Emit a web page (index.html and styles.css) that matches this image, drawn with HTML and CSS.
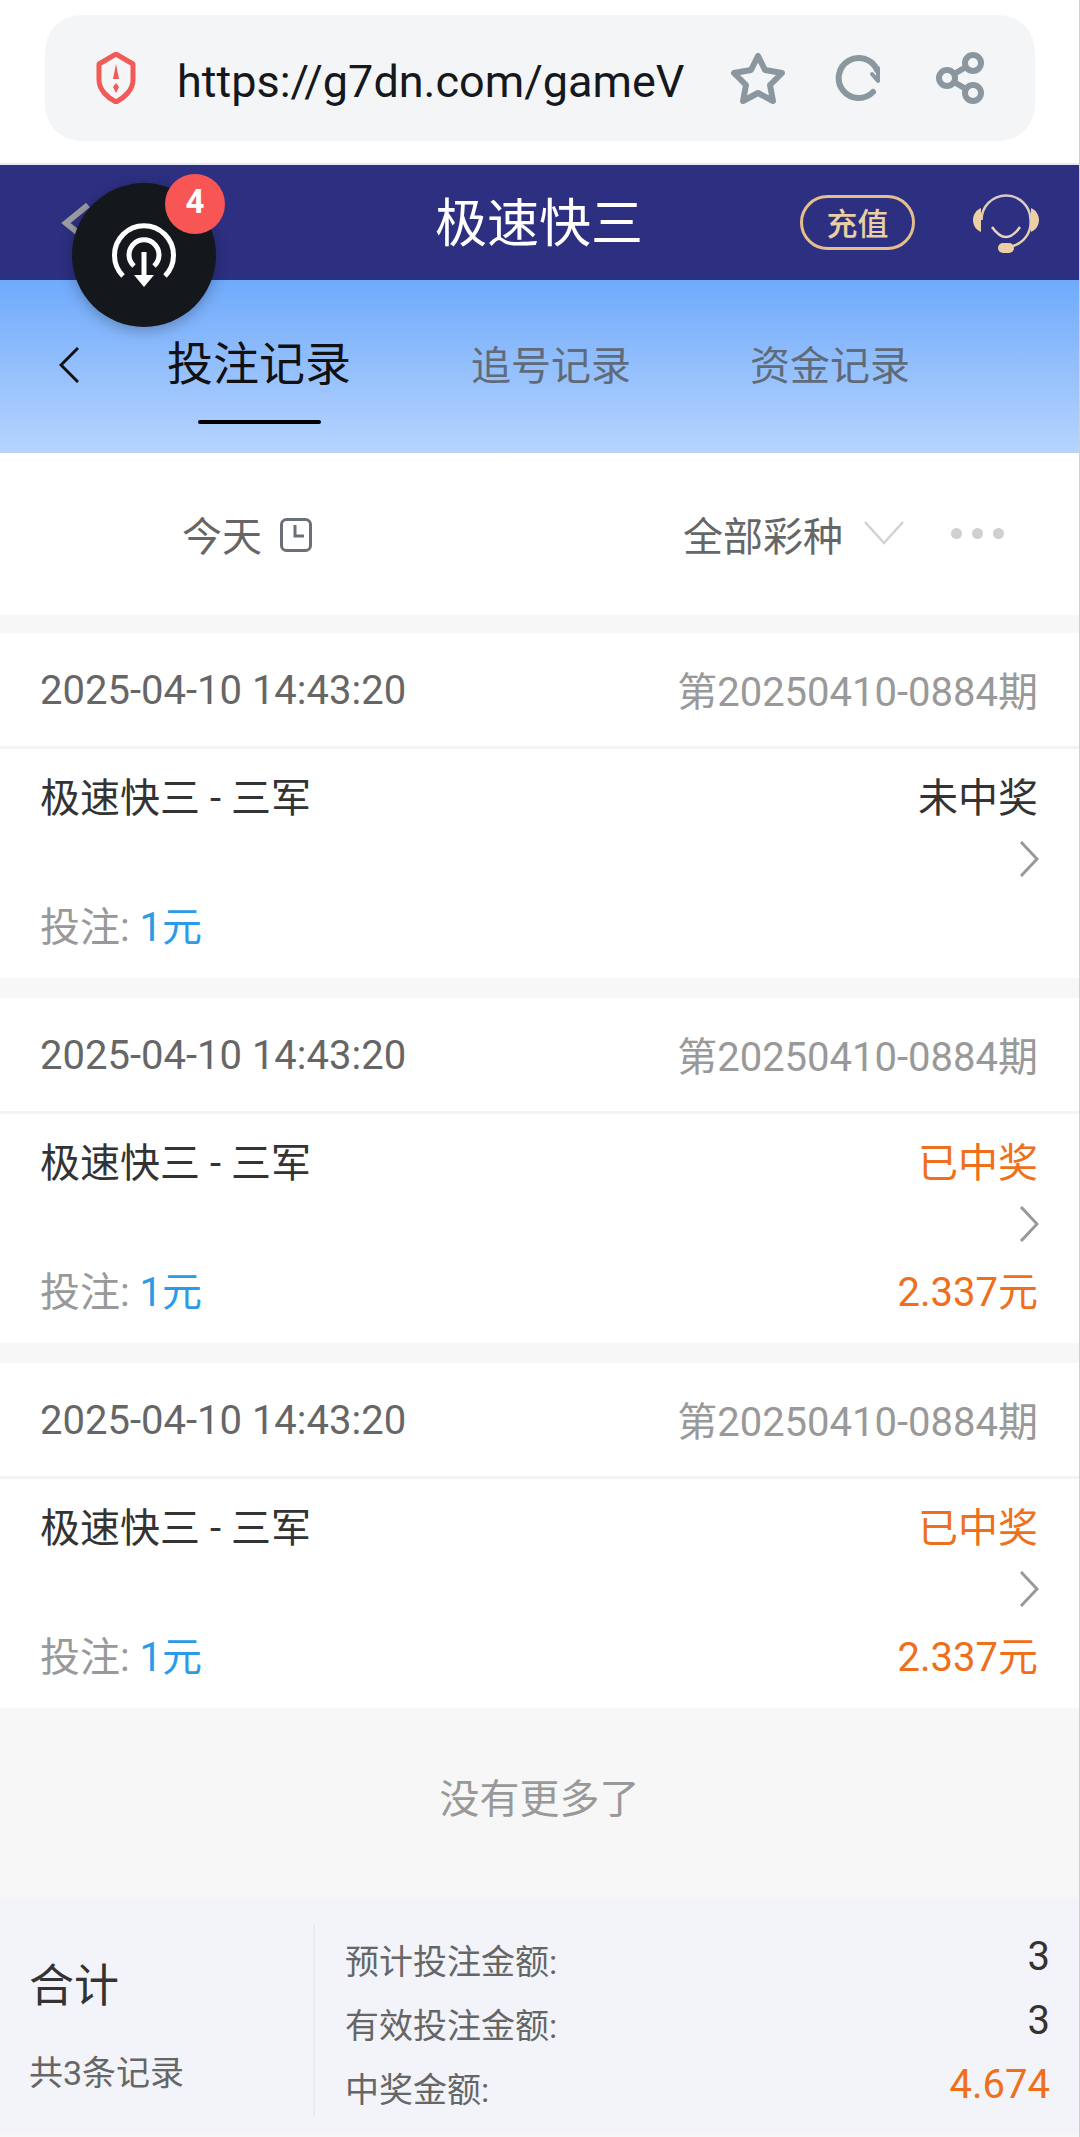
FILE: index.html
```html
<!DOCTYPE html>
<html lang="zh-CN">
<head>
    <meta charset="UTF-8">
    <meta name="viewport" content="width=device-width, initial-scale=1.0">
    <title>投注记录</title>
    <link rel="stylesheet" href="styles.css">
</head>
<body>

<div class="browser">
    <div class="browser__bar">
        <svg class="browser__shield" viewBox="0 0 40 52"><path d="M20 2 L37 12 V28 C37 38 28 46 20 50 C12 46 3 38 3 28 V12 Z" fill="none" stroke="#f05b58" stroke-width="5" stroke-linejoin="round"/><path d="M20 12 L23 27 H17 Z M20 31 L23 35 L20 41 L17 35 Z" fill="#f05b58"/></svg>
        <div class="browser__url">https://g7dn.com/gameV</div>
        <svg class="browser__icon browser__icon--star" viewBox="0 0 56 52"><path d="M28 4 L35 18 L52 21 L40 33 L43 49 L28 41 L13 49 L16 33 L4 21 L21 18 Z" fill="none" stroke="#8a979f" stroke-width="6" stroke-linejoin="round"/></svg>
        <svg class="browser__icon browser__icon--reload" viewBox="0 0 48 48"><path d="M38 38 A20 20 0 1 1 42 16" fill="none" stroke="#8a979f" stroke-width="6" stroke-linecap="round"/><path d="M43 14 V27 L37 20" fill="none" stroke="#8a979f" stroke-width="4" stroke-linecap="round" stroke-linejoin="round"/></svg>
        <svg class="browser__icon browser__icon--share" viewBox="0 0 50 52"><g fill="none" stroke="#8a979f" stroke-width="6"><circle cx="11" cy="26" r="8"/><circle cx="37" cy="11" r="8"/><circle cx="37" cy="41" r="8"/><path d="M18 22 L30 15 M18 30 L30 37"/></g></svg>
    </div>
</div>

<header class="topbar">
    <svg class="topbar__back" viewBox="0 0 30 42"><path d="M27 3 L5 21 L27 39" fill="none" stroke="#9b9ca3" stroke-width="6"/></svg>
    <div class="topbar__title">极速快三</div>
    <div class="topbar__charge">充值</div>
    <svg class="topbar__service" viewBox="0 0 66 60">
        <defs><linearGradient id="gold" x1="0" y1="0" x2="0" y2="1"><stop offset="0" stop-color="#d9c9c8"/><stop offset="1" stop-color="#edcfa5"/></linearGradient></defs>
        <path d="M8.500 27 A24.500 24.500 0 0 1 57.500 27 A24.500 24.500 0 0 1 40 53" fill="none" stroke="url(#gold)" stroke-width="2.500"/>
        <path d="M8 15 C3 17 0 22 0 27 C0 32 3 37 8 39 Z M58 15 C63 17 66 22 66 27 C66 32 63 37 58 39 Z" fill="#edcfa5"/>
        <path d="M19 34 Q33 54 47 34" fill="none" stroke="#e8d3c0" stroke-width="2.500"/>
        <rect x="25" y="50" width="16" height="10" rx="5" fill="#edcfa5"/>
    </svg>
</header>

<nav class="tabs">
    <svg class="tabs__back" viewBox="0 0 20 36"><path d="M19 1 L2 18 L19 35" fill="none" stroke="#111" stroke-width="3"/></svg>
    <div class="tabs__item tabs__item--active">投注记录</div>
    <div class="tabs__item">追号记录</div>
    <div class="tabs__item">资金记录</div>
</nav>

<div class="filter">
    <span class="filter__date">今天</span>
    <svg class="filter__clock" viewBox="0 0 32 34"><rect x="1.500" y="1.500" width="29" height="31" rx="5" fill="none" stroke="#6b7078" stroke-width="3"/><path d="M15 7 V18 H24" fill="none" stroke="#6b7078" stroke-width="3"/></svg>
    <span class="filter__type">全部彩种</span>
    <svg class="filter__arrow" viewBox="0 0 40 24"><path d="M1 1 L20 22 L39 1" fill="none" stroke="#d2d2d2" stroke-width="2.500"/></svg>
    <div class="filter__more"><i></i><i></i><i></i></div>
</div>

<main class="list">
    <section class="record">
        <div class="record__head">
            <span class="record__time">2025-04-10 14:43:20</span>
            <span class="record__issue">第20250410-0884期</span>
        </div>
        <div class="record__body">
            <span class="record__name">极速快三 - 三军</span>
            <span class="record__status">未中奖</span>
            <svg class="record__arrow" viewBox="0 0 20 36"><path d="M2 1 L18 18 L2 35" fill="none" stroke="#999" stroke-width="3"/></svg>
            <span class="record__bet">投注: <b>1元</b></span>
            <span class="record__prize"></span>
        </div>
    </section>
    <section class="record">
        <div class="record__head">
            <span class="record__time">2025-04-10 14:43:20</span>
            <span class="record__issue">第20250410-0884期</span>
        </div>
        <div class="record__body">
            <span class="record__name">极速快三 - 三军</span>
            <span class="record__status record__status--win">已中奖</span>
            <svg class="record__arrow" viewBox="0 0 20 36"><path d="M2 1 L18 18 L2 35" fill="none" stroke="#999" stroke-width="3"/></svg>
            <span class="record__bet">投注: <b>1元</b></span>
            <span class="record__prize">2.337元</span>
        </div>
    </section>
    <section class="record">
        <div class="record__head">
            <span class="record__time">2025-04-10 14:43:20</span>
            <span class="record__issue">第20250410-0884期</span>
        </div>
        <div class="record__body">
            <span class="record__name">极速快三 - 三军</span>
            <span class="record__status record__status--win">已中奖</span>
            <svg class="record__arrow" viewBox="0 0 20 36"><path d="M2 1 L18 18 L2 35" fill="none" stroke="#999" stroke-width="3"/></svg>
            <span class="record__bet">投注: <b>1元</b></span>
            <span class="record__prize">2.337元</span>
        </div>
    </section>
</main>

<div class="nomore">没有更多了</div>

<footer class="total">
    <div class="total__left">
        <div class="total__title">合计</div>
        <div class="total__count">共3条记录</div>
    </div>
    <div class="total__rows">
        <div class="total__row"><span>预计投注金额:</span><b>3</b></div>
        <div class="total__row"><span>有效投注金额:</span><b>3</b></div>
        <div class="total__row"><span>中奖金额:</span><b class="total__win">4.674</b></div>
    </div>
</footer>

<div class="floatball">
    <svg class="floatball__icon" viewBox="0 0 66 66"><g fill="none" stroke="#fff" stroke-width="5"><path d="M12 54 A29.500 29.500 0 1 1 54 54"/><path d="M23 44 A15 15 0 1 1 43 44"/><path d="M33 30 V55"/></g><path d="M23 53 H43 L33 65 Z" fill="#fff"/></svg>
    <span class="floatball__badge">4</span>
</div>

</body>
</html>
```

FILE: styles.css
```css
* {
    box-sizing: border-box;
}
body {
    margin: 0;
    height: 2137px;
    overflow: hidden;
    position: relative;
    background: #f7f7f7;
    border-right: 1px solid #d0d0d3;
    font-family: Roboto, "Noto Sans CJK SC", sans-serif;
    font-size: 40px;
    color: #333;
}

.browser {
    height: 165px;
    background: #fff;
    padding: 15px 44px 0 45px;
    border-bottom: 2px solid #e6e8f4;
}
.browser__bar {
    display: flex;
    align-items: center;
    height: 126px;
    padding-left: 51px;
    background: #f4f5f7;
    border-radius: 36px;
}
.browser__shield {
    width: 40px;
    height: 52px;
}
.browser__url {
    margin: 6px 0 0 41px;
    width: 505px;
    font-size: 45px;
    color: #15181c;
    white-space: nowrap;
}
.browser__icon--star {
    width: 56px;
    height: 52px;
    margin-left: 48px;
}
.browser__icon--reload {
    width: 48px;
    height: 48px;
    margin-left: 49px;
}
.browser__icon--share {
    width: 50px;
    height: 52px;
    margin-left: 53px;
}

.topbar {
    display: flex;
    align-items: center;
    height: 115px;
    padding-left: 61px;
    background: #2d2f80;
}
.topbar__back {
    width: 30px;
    height: 42px;
}
.topbar__title {
    margin: -6px 0 0 344px;
    width: 208px;
    font-size: 52px;
    color: #fff;
    white-space: nowrap;
}
.topbar__charge {
    margin-left: 157px;
    width: 115px;
    height: 55px;
    line-height: 54px;
    text-align: center;
    font-size: 31px;
    font-weight: 500;
    color: #e9cfa3;
    border: 3px solid #e5bf8a;
    border-radius: 28px;
}
.topbar__service {
    margin-left: 58px;
    width: 66px;
    height: 60px;
}

.tabs {
    display: flex;
    align-items: center;
    height: 173px;
    padding: 0 0 8px 59px;
    background: linear-gradient(#6faafb, #b7d4fe);
}
.tabs__back {
    width: 20px;
    height: 36px;
    margin: 4px 88px 0 0;
}
.tabs__item {
    margin-right: 119px;
    color: #5f6b78;
    white-space: nowrap;
    position: relative;
}
.tabs__item--active {
    margin-top: -6px;
    margin-right: 120px;
    font-size: 46px;
    color: #111;
}
.tabs__item--active::after {
    content: "";
    position: absolute;
    left: 31px;
    top: 93px;
    width: 123px;
    height: 4px;
    border-radius: 2px;
    background: #000;
}

.filter {
    display: flex;
    align-items: center;
    height: 162px;
    padding: 0 75px 0 182px;
    background: #fff;
    color: #666;
}
.filter__clock {
    width: 32px;
    height: 34px;
    margin-left: 18px;
    margin-top: 2px;
}
.filter__type {
    margin-left: auto;
}
.filter__arrow {
    width: 40px;
    height: 24px;
    margin-left: 21px;
    margin-top: -2px;
}
.filter__more {
    display: flex;
    gap: 10px;
    margin-left: 47px;
    margin-top: -2px;
}
.filter__more i {
    width: 11px;
    height: 11px;
    border-radius: 50%;
    background: #d0d0d0;
}

.list {
    padding-top: 18px;
}
.record {
    background: #fff;
}
.record + .record {
    margin-top: 20px;
}
.record__head {
    display: flex;
    justify-content: space-between;
    align-items: center;
    height: 116px;
    padding: 0 41px 0 40px;
    border-bottom: 3px solid #f4f4f4;
}
.record__time {
    margin-top: 2px;
    color: #666;
}
.record__issue {
    margin-top: -2px;
    color: #999;
}
.record__body {
    display: grid;
    grid-template-columns: 1fr auto;
    grid-template-rows: 54px 36px 56px;
    row-gap: 19px;
    justify-items: start;
    align-items: center;
    height: 229px;
    padding: 19px 41px 0 40px;
}
.record__status,
.record__prize,
.record__arrow {
    justify-self: end;
}
.record__arrow {
    grid-column: 2;
    grid-row: 2;
    width: 20px;
    height: 36px;
    margin-right: -1px;
}
.record__bet {
    grid-column: 1;
    grid-row: 3;
    color: #999;
}
.record__bet b {
    font-weight: 400;
    color: #2b9be8;
}
.record__prize {
    grid-column: 2;
    grid-row: 3;
    color: #ee6f1c;
}
.record__status--win {
    color: #ee6f1c;
}

.nomore {
    height: 189px;
    line-height: 184px;
    text-align: center;
    color: #999;
}

.total {
    display: flex;
    align-items: flex-start;
    height: 238px;
    padding-top: 27px;
    background: #f2f4f9;
}
.total__left {
    width: 315px;
    height: 193px;
    padding: 35px 0 0 29px;
    border-right: 2px solid #e9ebef;
}
.total__title {
    font-size: 45px;
    line-height: 56px;
}
.total__count {
    margin-top: 34px;
    font-size: 34px;
    line-height: 48px;
    color: #666;
}
.total__rows {
    flex: 1;
    padding: 6px 29px 0 30px;
}
.total__row {
    display: flex;
    justify-content: space-between;
    height: 64px;
    font-size: 34px;
    line-height: 64px;
    color: #666;
}
.total__row b {
    margin-top: -5px;
    font-weight: 400;
    font-size: 40px;
    color: #333;
}
.total__row .total__win {
    color: #ee6f1c;
}

/* floating download button, sits over the header */
.floatball {
    position: absolute;
    left: 72px;
    top: 183px;
    display: flex;
    align-items: center;
    justify-content: center;
    width: 144px;
    height: 144px;
    border-radius: 50%;
    background: #14181d;
    box-shadow: 0 4px 14px rgba(0, 0, 0, 0.25);
}
.floatball__icon {
    width: 66px;
    height: 66px;
}
.floatball__badge {
    position: absolute;
    left: 93px;
    top: -9px;
    width: 60px;
    height: 60px;
    border-radius: 50%;
    background: #f75654;
    color: #fff;
    font-size: 33px;
    font-weight: 700;
    line-height: 56px;
    text-align: center;
}
```
